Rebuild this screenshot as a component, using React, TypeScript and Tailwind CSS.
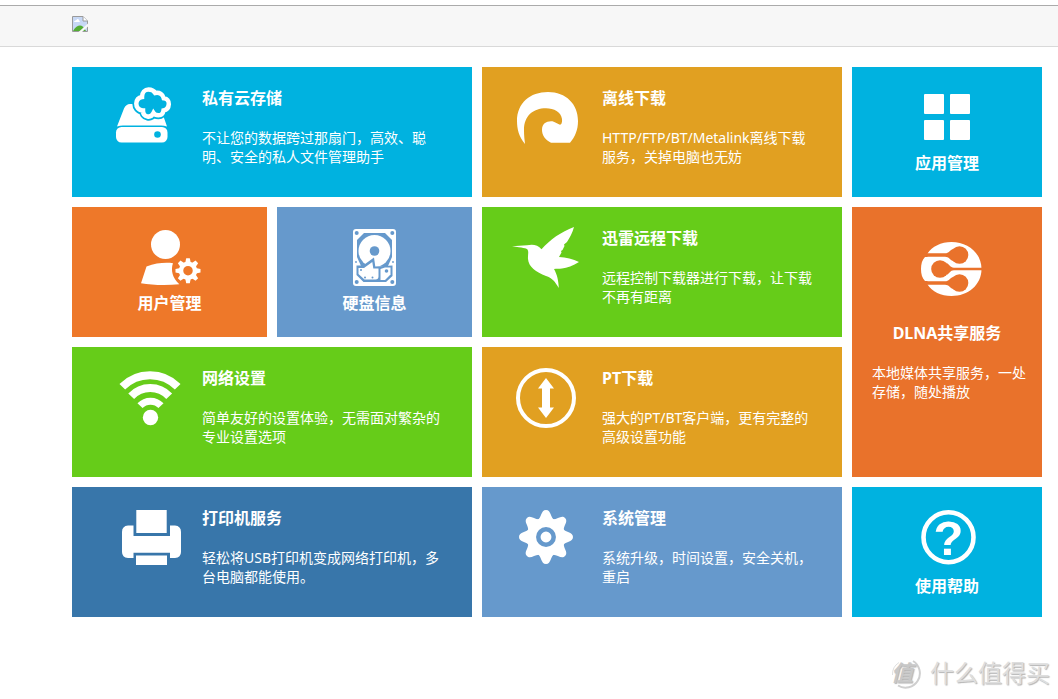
import type { ReactNode } from 'react'

const TOOTH_ANGLES = [0, 45, 90, 135, 180, 225, 270, 315]

function BrokenImageIcon() {
  return (
    <svg className="h-4 w-4" viewBox="0 0 16 16" role="img" aria-label="logo">
      <path d="M.5 .5H11L15.5 5V15.5H.5Z" fill="#c7d8f5" stroke="#9a9a9a" />
      <path d="M11 .5V5H15.5" fill="#fff" stroke="#9a9a9a" />
      <path d="M2 6C2 4.500 4 4.500 4.500 4C5 2.500 7 3 7 4.500C8 4.500 8 6 7.500 6Z" fill="#fff" />
      <path d="M1 15C3 11 6 9.500 8 9.500C10 9.500 12 11 14 15Z" fill="#54ad34" />
      <path d="M6.500 16L16 7.500V10.500L10 16Z" fill="#f7f7f7" />
    </svg>
  )
}

function CloudDriveIcon() {
  const cloud =
    'M71 43.500C66.500 43.500 64.200 40 64.300 36.500C64.500 32.500 67 30.500 70 30C70 25.500 73 22.500 76.500 22.500C79.500 22.500 82 24 83.200 26C87.500 25 91 27.500 91.800 31.200C95 31.500 97 34 96.800 37C96.600 40.500 94.500 43 91.500 43.500C91 46.500 89 48.300 86.500 48.300C84.300 48.300 82.500 47.500 81.500 46C80 49 78 50 75.500 49.500C72.500 49 71 46.500 71 43.500Z'
  return (
    <svg className="h-16 w-[72px]" viewBox="40 20 72 64" fill="#fff" aria-hidden="true">
      <path d="M45 59.500L52 41.500Q54 37 58 37H72V45H88L91 48L95 59.500Q92 58.500 89 58.500H51Q48 58.500 45 59.500Z" />
      <path d={cloud} fill="#00b2e0" stroke="#00b2e0" strokeWidth="8" />
      <path d={cloud} fill="#00b2e0" stroke="#fff" strokeWidth="4.500" />
      <rect x="44" y="60" width="51.500" height="15.500" rx="5.500" />
      <circle cx="85.500" cy="67.500" r="3.300" fill="#00b2e0" />
    </svg>
  )
}

function WaveIcon() {
  return (
    <svg className="h-16 w-[72px]" viewBox="28 20 72 64" fill="#fff" aria-hidden="true">
      <path d="M43 77C37 70 35 62 35 54C35 36 48 25 66 25C84 25 96 37 96 54C96 63 93 70 88 75.700H69C63 73 60 68 60 63C60 57 64 54.300 69 54.300C73 54.300 75 57 78 57.700C80 57.700 80.200 54 80 52C79 45 72 41.300 64 41.300C51 41.300 42 49 42 63C42 69 42.500 72 43 77Z" />
    </svg>
  )
}

function AppsIcon() {
  return (
    <svg className="h-[65px] w-[72px]" viewBox="59 20 72 65" fill="#fff" aria-hidden="true">
      <rect x="72" y="27" width="20" height="20" rx="1" />
      <rect x="98" y="27" width="20" height="20" rx="1" />
      <rect x="72" y="53" width="20" height="20" rx="1" />
      <rect x="98" y="53" width="20" height="20" rx="1" />
    </svg>
  )
}

function UserIcon() {
  return (
    <svg className="h-[65px] w-[71px]" viewBox="62 20 71 65" fill="#fff" aria-hidden="true">
      <circle cx="93.500" cy="37.500" r="14.500" />
      <path d="M74.500 59.500C84 56 93 55.300 101 56.200C98.500 63 100.500 71 107.300 77.200C95 78.600 80 78.200 69 76.200Z" />
      {TOOTH_ANGLES.map((angle) => (
        <path key={angle} d="M113.200 56L114.200 51.200H117.800L118.800 56Z" transform={`rotate(${angle} 116 63.700)`} />
      ))}
      <circle cx="116" cy="63.700" r="7" fill="none" stroke="#fff" strokeWidth="4.500" />
    </svg>
  )
}

function DiskIcon() {
  return (
    <svg className="h-[65px] w-[71px]" viewBox="62 20 71 65" fill="#fff" aria-hidden="true">
      <rect x="76" y="22" width="43" height="57" rx="3" />
      <g fill="#6699cc">
        <circle cx="79.700" cy="26" r="2" />
        <circle cx="115.300" cy="26" r="2" />
        <circle cx="79.700" cy="75" r="2" />
        <circle cx="115.300" cy="75" r="2" />
        <circle cx="79" cy="55" r="0.900" />
        <circle cx="116" cy="55" r="0.900" />
        <path d="M87 26H108L115 33V50L111 59H84L80 50V33Z" />
      </g>
      <circle cx="97.500" cy="44" r="16" />
      <circle cx="97.500" cy="44" r="4.800" fill="#6699cc" />
      <path d="M79.500 58.500H86L97 50.500L98.300 59.500L115.500 58.500V69L109 75H86.500L79.500 68Z" fill="#6699cc" />
      <path d="M81.500 61H87L95.300 55L96.300 61.500H101.500V69.500Q101.500 72.500 98.500 72.500H87.500L81.500 67Z" />
      <path d="M103.500 62L108 60.500H113.500V67.500L108 73H103.500Z" />
      <g fill="#6699cc">
        <circle cx="84" cy="63" r="1" />
        <circle cx="88" cy="70.500" r="1" />
        <circle cx="95.500" cy="70.500" r="1" />
        <circle cx="109.500" cy="64" r="1.800" />
      </g>
    </svg>
  )
}

function BirdIcon() {
  return (
    <svg className="h-16 w-[72px]" viewBox="28 20 72 64" fill="#fff" aria-hidden="true">
      <path d="M30 39.300L45 38.300C50 37 56 37.500 59.500 42.300C68 32.500 79 25 92 20C90.500 26 87.500 31 85 35L82 37.500L82.500 39L80.500 43L79 44L79.500 45.500L77 50C84 50.300 91 52 97 55C91 58.500 85 61 80 61.500C77 62 74.500 61.500 72 62C75 67.500 76.500 73 76.800 81C73 74.500 70 71 64 69C54 65 46.500 60 46 52C45.700 48 47 45 45.500 42.500C44 41 41 41 30 39.300Z" />
    </svg>
  )
}

function DlnaIcon() {
  return (
    <svg className="h-[95px] w-[72px]" viewBox="59 20 72 95" aria-hidden="true">
      <path d="M75.500 46.500C80 39.500 89 35 99.500 35C116 35 129.500 46 129.500 62C129.500 78 116 89 99.500 89C89 89 80 84.500 75.500 77.500V74H73C70 71 69 67 69 62C69 57 70 53 73 50H75.500Z" fill="#fff" />
      <g fill="#e9722b">
        <circle cx="107.500" cy="48" r="8.800" />
        <circle cx="88" cy="62" r="8.800" />
        <circle cx="107.500" cy="76" r="8.800" />
        <path d="M68 46.300H93C97 46.300 98 43 101 42V54C98 53 97 49.700 93 49.700H68Z" />
        <path d="M131 60.700H102C98 60.700 97.500 57 94.500 56V68C97.500 67 98 63.300 102 63.300H131Z" />
        <path d="M68 74.300H93C97 74.300 98 71 101 70V82C98 81 97 77.700 93 77.700H68Z" />
      </g>
    </svg>
  )
}

function WifiIcon() {
  return (
    <svg className="h-16 w-[72px]" viewBox="40 20 72 64" fill="none" stroke="#fff" strokeWidth="8" aria-hidden="true">
      <path d="M50.300 39.700A39 39 0 0 1 105.700 39.700" />
      <path d="M59.200 49.300A26 26 0 0 1 97.200 49.300" />
      <path d="M68 58.700A14.500 14.500 0 0 1 89 58.700" strokeWidth="7" />
      <circle cx="78.500" cy="70.500" r="7.700" fill="#fff" stroke="none" />
    </svg>
  )
}

function TransferIcon() {
  return (
    <svg className="h-16 w-[72px]" viewBox="28 20 72 64" fill="#fff" aria-hidden="true">
      <circle cx="64" cy="51" r="28" fill="none" stroke="#fff" strokeWidth="4" />
      <path d="M64 31L72 41.500H68V60.500H72L64 71L56 60.500H60V41.500H56Z" />
    </svg>
  )
}

function PrinterIcon() {
  return (
    <svg className="h-16 w-[72px]" viewBox="40 20 72 64" fill="#fff" aria-hidden="true">
      <rect x="64.300" y="23" width="30.400" height="23" />
      <path d="M56 38.500H61.500V49H98V38.500H103Q109 39 109 45V65Q109 70.500 103 71H98V65.700H61.500V71H56Q50 70.500 50 65V45Q50 39 56 38.500Z" />
      <rect x="64" y="68.500" width="31" height="9.500" />
    </svg>
  )
}

function GearIcon() {
  return (
    <svg className="h-16 w-[72px]" viewBox="28 20 72 64" fill="#fff" aria-hidden="true">
      {TOOTH_ANGLES.map((angle) => (
        <path key={angle} d="M55 33.500C60 31 58.500 23 64 23C69.500 23 68 31 73 33.500Z" transform={`rotate(${angle} 64 50)`} />
      ))}
      <circle cx="64" cy="50" r="19" />
      <circle cx="64" cy="50" r="7.700" fill="none" stroke="#6699cc" strokeWidth="4.500" />
    </svg>
  )
}

function HelpIcon() {
  return (
    <svg className="h-[68px] w-[72px]" viewBox="59 20 72 68" fill="#fff" aria-hidden="true">
      <circle cx="96.500" cy="50.300" r="25" fill="none" stroke="#fff" strokeWidth="4.600" />
      <text x="96.500" y="68" textAnchor="middle" className="font-['Liberation_Sans',sans-serif] text-[49px] font-bold">
        ?
      </text>
    </svg>
  )
}

interface Tile {
  title: string
  description?: string
  icon: ReactNode
  className: string
  // 'first' and 'second' are the wide tiles of each column, 'stacked' puts the icon on top
  layout: 'first' | 'second' | 'stacked'
}

const tiles: Tile[] = [
  {
    title: '私有云存储',
    description: '不让您的数据跨过那扇门，高效、聪明、安全的私人文件管理助手',
    icon: <CloudDriveIcon />,
    className: 'col-span-2 bg-[#00b2e0]',
    layout: 'first',
  },
  {
    title: '离线下载',
    description: 'HTTP/FTP/BT/Metalink离线下载服务，关掉电脑也无妨',
    icon: <WaveIcon />,
    className: 'bg-[#e1a021]',
    layout: 'second',
  },
  { title: '应用管理', icon: <AppsIcon />, className: 'bg-[#00b2e0]', layout: 'stacked' },
  { title: '用户管理', icon: <UserIcon />, className: 'bg-[#ee7829]', layout: 'stacked' },
  { title: '硬盘信息', icon: <DiskIcon />, className: 'bg-[#6699cc]', layout: 'stacked' },
  {
    title: '迅雷远程下载',
    description: '远程控制下载器进行下载，让下载不再有距离',
    icon: <BirdIcon />,
    className: 'bg-[#66cc19]',
    layout: 'second',
  },
  {
    title: 'DLNA共享服务',
    description: '本地媒体共享服务，一处存储，随处播放',
    icon: <DlnaIcon />,
    className: 'row-span-2 bg-[#e9722b]',
    layout: 'stacked',
  },
  {
    title: '网络设置',
    description: '简单友好的设置体验，无需面对繁杂的专业设置选项',
    icon: <WifiIcon />,
    className: 'col-span-2 bg-[#66cc19]',
    layout: 'first',
  },
  {
    title: 'PT下载',
    description: '强大的PT/BT客户端，更有完整的高级设置功能',
    icon: <TransferIcon />,
    className: 'bg-[#e1a021]',
    layout: 'second',
  },
  {
    title: '打印机服务',
    description: '轻松将USB打印机变成网络打印机，多台电脑都能使用。',
    icon: <PrinterIcon />,
    className: 'col-span-2 bg-[#3876aa]',
    layout: 'first',
  },
  {
    title: '系统管理',
    description: '系统升级，时间设置，安全关机，重启',
    icon: <GearIcon />,
    className: 'bg-[#6699cc]',
    layout: 'second',
  },
  { title: '使用帮助', icon: <HelpIcon />, className: 'bg-[#00b2e0]', layout: 'stacked' },
]

function TileLink({ tile }: { tile: Tile }) {
  if (tile.layout === 'stacked') {
    return (
      <a href="#" className={`flex flex-col items-center pt-5 text-white ${tile.className}`}>
        {tile.icon}
        <h2 className="text-base leading-[22px] font-bold">{tile.title}</h2>
        {tile.description && (
          <p className="mt-[19px] w-full pr-3 pl-5 text-sm leading-[19px]">{tile.description}</p>
        )}
      </a>
    )
  }

  return (
    <a href="#" className={`flex items-start pt-5 pr-6 text-white ${tile.className}`}>
      <span className={tile.layout === 'first' ? 'w-[130px] shrink-0 pl-10' : 'w-[120px] shrink-0 pl-7'}>
        {tile.icon}
      </span>
      <div className="min-w-0 flex-1">
        <h2 className="text-base leading-[22px] font-bold">{tile.title}</h2>
        <p className="mt-[19px] text-sm leading-[19px]">{tile.description}</p>
      </div>
    </a>
  )
}

function Watermark() {
  return (
    <footer className="mt-10 flex items-center justify-end gap-2 pr-2 text-[#dedede] [text-shadow:1px_1px_1px_#b4b4b4]">
      <svg className="h-8 w-8" viewBox="0 0 32 32" aria-label="值" role="img">
        <path d="M23 4A14 14 0 0 1 8 28.500" fill="none" stroke="#cfcfcf" strokeWidth="2" />
        <path d="M2.500 18A14 14 0 0 1 9 5.500" fill="none" stroke="#e0e0e0" />
        <text x="12" y="24" textAnchor="middle" fill="#c8c8c8" className="text-[22px] font-bold italic">
          值
        </text>
      </svg>
      <span className="text-[24px] leading-8">什么值得买</span>
    </footer>
  )
}

export default function App() {
  return (
    <div className="bg-white pt-[5px] font-['Noto_Sans','Noto_Sans_CJK_SC',sans-serif]">
      <header className="border-t border-b border-t-[#ababab] border-b-[#d9d9d9] bg-[#f7f7f7] pt-2.5 pb-3.5 pl-[72px]">
        <a href="#" className="block h-4 w-4">
          <BrokenImageIcon />
        </a>
      </header>

      <main className="mt-5 grid auto-rows-[130px] grid-cols-[195fr_195fr_360fr_190fr] gap-2.5 pr-4 pl-[72px]">
        {tiles.map((tile) => (
          <TileLink key={tile.title} tile={tile} />
        ))}
      </main>

      <Watermark />
    </div>
  )
}
